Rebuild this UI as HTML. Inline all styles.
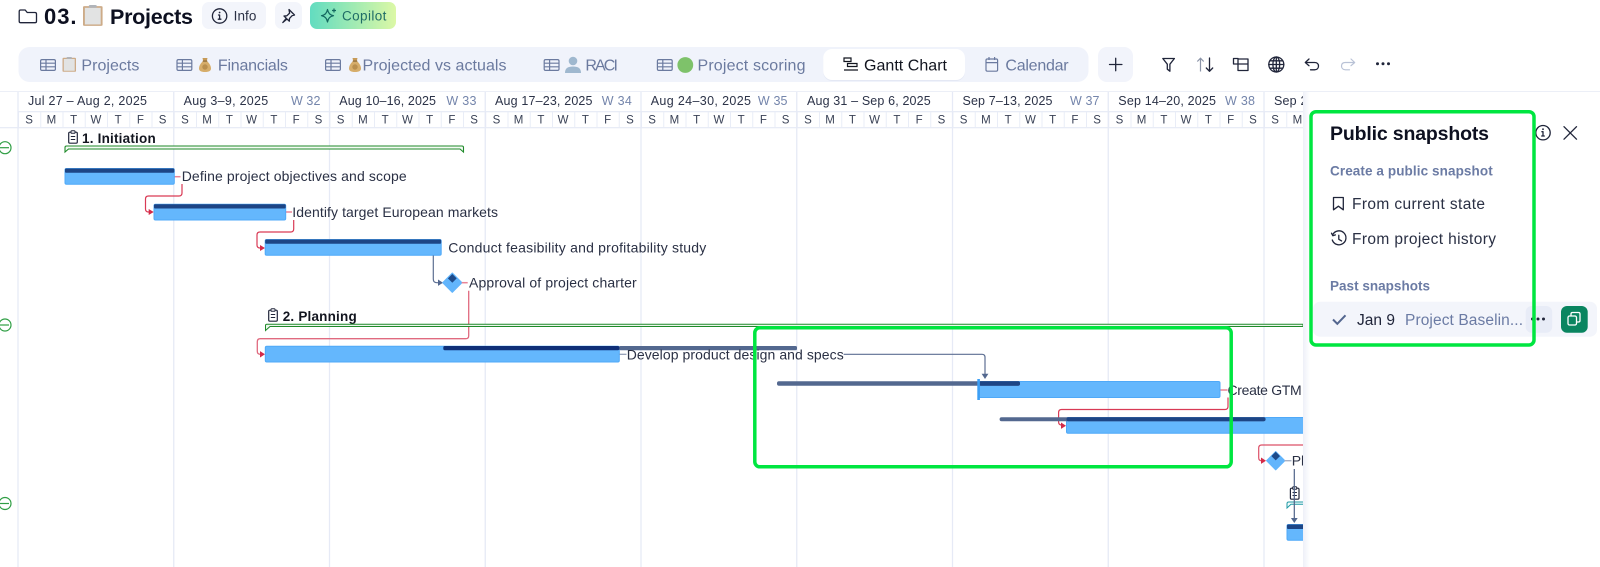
<!DOCTYPE html>
<html><head><meta charset="utf-8"><style>
html,body{margin:0;padding:0;background:#fff;width:1600px;height:567px;overflow:hidden}
svg{display:block}
text{font-family:"Liberation Sans",sans-serif}
.tab{font-size:16px;fill:#6b7a9f}
.date{font-size:12.5px;fill:#2c3348}
.wk{font-size:12.5px;fill:#7485ab}
.day{font-size:11.5px;fill:#3a4256;text-anchor:middle}
.lbl{font-size:14px;fill:#2a3044}
.grp{font-size:13.5px;font-weight:bold;fill:#12151f}
.ti{fill:none;stroke:#6b7a9f;stroke-width:1.2}
.ic{fill:none;stroke:#20253a;stroke-width:1.3;stroke-linecap:round;stroke-linejoin:round}
.red{fill:none;stroke:#d93a55;stroke-width:1.2}
.redl{fill:none;stroke:#ea8496;stroke-width:1.5}
.gry{fill:none;stroke:#5d6f92;stroke-width:1.2}
.bar{fill:#64b7fd;stroke:#4fa9f8;stroke-width:1}
.dk{fill:#1d4585}
.bl{fill:#53688f}
</style></head><body>
<svg width="1600" height="567" viewBox="0 0 1600 567" xmlns="http://www.w3.org/2000/svg">
<defs>
<pattern id="dp" x="18" y="112" width="22.25" height="15" patternUnits="userSpaceOnUse"><rect x="0" y="0" width="1" height="15" fill="#e9edf7"/></pattern>
<linearGradient id="cop" x1="0" x2="1" y1="0" y2="0"><stop offset="0" stop-color="#62dcc0"/><stop offset="1" stop-color="#dcf8a6"/></linearGradient>
<linearGradient id="sh" x1="0" x2="1" y1="0" y2="0"><stop offset="0" stop-color="#eef0f8"/><stop offset="1" stop-color="#fff"/></linearGradient>
<g id="tbl"><rect x=".6" y=".6" width="14.8" height="10.8" rx="1.4" class="ti"/><path d="M.6 4.2H15.4M.6 7.8H15.4M6 .6V11.4" class="ti"/></g>
<g id="clip"><rect x="0" y="1" width="13.5" height="17.5" rx="1" fill="#cdab88"/><rect x="1.3" y="2.5" width="10.9" height="14.7" fill="#e2e3e3"/><rect x="4" y="0" width="5.5" height="2.4" rx="1" fill="#b0b4ba"/></g>
<g id="bag"><path d="M4 3.5C1 6.5 0 9 0 11c0 2.4 2 3.5 6 3.5s6-1.1 6-3.5c0-2-1-4.5-4-7.500z" fill="#d6ad6a"/><path d="M3.5 .5L8.5 .5 7.8 3.5H4.2z" fill="#c69a58"/><rect x="3.8" y="3" width="4.4" height="1.2" fill="#8a6a3a"/><circle cx="6" cy="9.5" r="2.7" fill="#b98f4e"/></g>
<g id="cb"><rect x=".7" y="2.2" width="8.6" height="11" rx="1.2" fill="none" stroke="#20253a" stroke-width="1.2"/><rect x="3" y=".7" width="4" height="2.6" rx=".8" fill="#fff" stroke="#20253a" stroke-width="1"/><path d="M2.8 6.5H7.2M2.8 9.500H7.2" stroke="#20253a" stroke-width="1.1"/></g>
</defs>

<!-- Header -->
<path d="M19.2 11.5c0-.9.6-1.500 1.400-1.500h4.600l2 2.500h7.800c.9 0 1.500.7 1.500 1.500v7.200c0 .9-.7 1.500-1.500 1.500H20.700c-.9 0-1.500-.7-1.500-1.500z" class="ic"/>
<text x="44" y="24" font-size="22" font-weight="bold" fill="#0d1020" textLength="32.5">03.</text>
<g transform="translate(83,5) scale(1.45,1.13)"><use href="#clip"/></g>
<text x="110" y="24" font-size="21.5" font-weight="bold" fill="#0d1020" textLength="83">Projects</text>
<rect x="202" y="2" width="64" height="27" rx="7" fill="#f3f5fb"/>
<circle cx="219.6" cy="16" r="7.2" class="ic"/><path d="M219.600 15v4.200M218.300 19.200h2.600M218.500 15h1.100" class="ic" stroke-width="1.1"/><circle cx="219.6" cy="12.5" r=".9" fill="#20253a"/>
<text x="233.6" y="20.500" font-size="13.5" fill="#2a3044" textLength="22.8">Info</text>
<rect x="275" y="2" width="27" height="27" rx="7" fill="#f3f5fb"/>
<path d="M289 9.500l5.500 5.500-2.300.6-2.700 2.800-.2 2.800-2.300-2.200-4.200 3.500 3.500-4.200-2.300-2.300 2.800-.2 2.800-2.700z" class="ic" stroke-width="1.15"/>
<rect x="310" y="2" width="86" height="27" rx="7" fill="url(#cop)"/>
<path d="M327.500 9.500c.8 3.700 2.300 5.300 6 6.200-3.700.9-5.200 2.500-6 6.300-.8-3.800-2.300-5.400-6-6.300 3.700-.9 5.200-2.500 6-6.200zM334 8.500v4M332 10.500h4" fill="none" stroke="#12675f" stroke-width="1.2" stroke-linejoin="round"/>
<text x="342" y="20.500" font-size="13.500" fill="#1f6c66" textLength="44.4">Copilot</text>

<!-- Tabs bar -->
<rect x="18.5" y="47" width="1070" height="35" rx="11" fill="#f0f3fb"/>
<use href="#tbl" x="40" y="59"/>
<g transform="translate(62.5,57) scale(1,.8)"><use href="#clip"/></g>
<text class="tab" x="81.4" y="70.500" textLength="58">Projects</text>
<use href="#tbl" x="176.4" y="59"/>
<use href="#bag" x="199" y="57.5"/>
<text class="tab" x="217.9" y="70.5" textLength="70">Financials</text>
<use href="#tbl" x="325" y="59"/>
<use href="#bag" x="349" y="57.5"/>
<text class="tab" x="362.5" y="70.5" textLength="144">Projected vs actuals</text>
<use href="#tbl" x="543.6" y="59"/>
<circle cx="573" cy="61" r="4.3" fill="#9fb8cf"/><path d="M565 73c0-5 3-6.500 8-6.500s8 1.500 8 6.500z" fill="#9fb8cf"/>
<text class="tab" x="585.4" y="70.5" textLength="32.5">RACI</text>
<use href="#tbl" x="656.8" y="59"/>
<circle cx="685.3" cy="65" r="7.9" fill="#7ec26a"/>
<text class="tab" x="697.5" y="70.5" textLength="108">Project scoring</text>
<rect x="823.2" y="49" width="141.8" height="31" rx="9" fill="#e4e8f4" transform="translate(0,1)"/>
<rect x="823.2" y="49" width="141.8" height="31" rx="9" fill="#fff"/>
<path d="M844 58h7v3.500h-7zM847.500 63.500h9.500v3h-9.500zM844 70h14" fill="none" stroke="#12151f" stroke-width="1.2"/>
<text x="864" y="70.5" font-size="16" fill="#12151f" textLength="83">Gantt Chart</text>
<rect x="986" y="59" width="11.6" height="12.2" rx="1.3" class="ti"/><path d="M986 62.600h11.600M989 57v3M994.600 57v3" class="ti"/>
<text class="tab" x="1005.4" y="70.5" textLength="63.2">Calendar</text>

<rect x="1098" y="47" width="35" height="35" rx="9" fill="#f2f4fb"/>
<path d="M1109.500 64.500h12.400M1115.700 58.300v12.400" class="ic" stroke-width="1.3"/>
<path d="M1162.800 58.500h11.600l-4.500 5.700v7l-2.600-2v-5z" class="ic" stroke-width="1.2"/>
<path d="M1200.500 71.500V58.300M1197.300 61.500l3.200-3.300 3.200 3.300" fill="none" stroke="#8b94a8" stroke-width="1.2"/><path d="M1209.500 58v13.300M1206.300 68l3.200 3.300 3.200-3.300" class="ic" stroke-width="1.2"/>
<path d="M1233.500 58.500h4.500M1233.500 58.500v5.500M1233.500 64h4.500M1238 59h10v5h-10zM1238 64h10v6.500h-10z" class="ic" stroke-width="1.2"/>
<circle cx="1276.3" cy="64.5" r="7.5" class="ic" stroke-width="1.25"/><ellipse cx="1276.3" cy="64.5" rx="3.4" ry="7.5" class="ic" stroke-width="1.1"/><path d="M1268.800 64.500h15M1270 60.800h12.600M1270 68.200h12.600M1276.300 57v15" class="ic" stroke-width="1"/>
<path d="M1309 59l-3.700 3.500 3.700 3.200M1305.500 62.500h9c2.700 0 4 1.500 4 3.500s-1.300 3.800-4 3.800h-4" class="ic" stroke-width="1.2"/>
<path d="M1351 59l3.700 3.500-3.700 3.200M1354.500 62.500h-9c-2.700 0-4 1.500-4 3.500s1.300 3.800 4 3.800h4" fill="none" stroke="#b9c2d6" stroke-width="1.2" stroke-linecap="round" stroke-linejoin="round"/>
<circle cx="1377.5" cy="63.8" r="1.5" fill="#20253a"/><circle cx="1383" cy="63.8" r="1.5" fill="#20253a"/><circle cx="1388.5" cy="63.8" r="1.5" fill="#20253a"/>

<!-- Timeline header -->
<rect x="0" y="91" width="1600" height="1" fill="#eceff7"/>
<rect x="18" y="111" width="1285" height="1.3" fill="#e8ecf6"/>
<rect x="0" y="127" width="1303" height="1.3" fill="#e8ecf6"/>
<rect x="18" y="112" width="1285" height="15" fill="url(#dp)"/>
<path d="M18 92V567M173.750 92V567M329.500 92V567M485.250 92V567M641 92V567M796.750 92V567M952.500 92V567M1108.250 92V567M1264 92V567" stroke="#e6eaf6" stroke-width="1.3" fill="none"/>

<text class="date" x="28" y="105" textLength="119">Jul 27 – Aug 2, 2025</text>
<text class="date" x="183.6" y="105" textLength="84.6">Aug 3–9, 2025</text>
<text class="wk" x="291" y="105" textLength="29.4">W 32</text>
<text class="date" x="339.3" y="105" textLength="96.7">Aug 10–16, 2025</text>
<text class="wk" x="446.4" y="105" textLength="30">W 33</text>
<text class="date" x="495" y="105" textLength="97.5">Aug 17–23, 2025</text>
<text class="wk" x="601.8" y="105" textLength="30">W 34</text>
<text class="date" x="650.7" y="105" textLength="100.3">Aug 24–30, 2025</text>
<text class="wk" x="757.9" y="105" textLength="29.6">W 35</text>
<text class="date" x="807" y="105" textLength="123.7">Aug 31 – Sep 6, 2025</text>
<text class="date" x="962.5" y="105" textLength="90">Sep 7–13, 2025</text>
<text class="wk" x="1070" y="105" textLength="29.5">W 37</text>
<text class="date" x="1118.3" y="105" textLength="97.7">Sep 14–20, 2025</text>
<text class="wk" x="1225" y="105" textLength="30">W 38</text>
<text class="date" x="1274" y="105" textLength="98">Sep 21–27, 2025</text>
<text class="day" y="123.500" x="29.1 51.4 73.6 95.9 118.1 140.4 162.6 184.9 207.1 229.4 251.6 273.9 296.1 318.4 340.6 362.9 385.1 407.4 429.6 451.9 474.1 496.4 518.6 540.9 563.1 585.4 607.6 629.9 652.1 674.4 696.6 718.9 741.1 763.4 785.6 807.9 830.1 852.4 874.6 896.9 919.1 941.4 963.6 985.9 1008.1 1030.4 1052.6 1074.9 1097.1 1119.4 1141.6 1163.9 1186.1 1208.4 1230.6 1252.9 1275.1 1297.4">SMTWTFSSMTWTFSSMTWTFSSMTWTFSSMTWTFSSMTWTFSSMTWTFSSMTWTFSSM</text>

<!-- Left markers -->
<g fill="none" stroke="#2f9e44" stroke-width="1.2"><circle cx="5" cy="147.7" r="6"/><path d="M0 147.700h9"/><circle cx="5" cy="325" r="6"/><path d="M0 325h9"/><circle cx="5" cy="503.5" r="6"/><path d="M0 503.500h9"/></g>

<!-- Group 1 -->
<g transform="translate(68,130)"><use href="#cb"/></g>
<text class="grp" x="82" y="143" textLength="73.7">1. Initiation</text>
<path d="M65 152v-4.500q0-1.500 1.500-1.500H462q1.500 0 1.500 1.500V152l-3.500-3H68.500z" fill="#f4fbf4" stroke="#1f8a2a" stroke-width="1.1"/>

<!-- Task 1 -->
<path d="M174.500 176.700h6" class="redl"/>
<path d="M182 184v9q0 3-3 3H148.500q-3 0-3 3v10q0 3 3 3h3" class="red"/><path d="M153.700 212l-5-3v6z" fill="#d42a48"/>
<rect x="65" y="168.5" width="109.3" height="15.8" rx="1.5" class="bar"/><rect x="65" y="168.5" width="109.3" height="4.3" rx="1" class="dk"/>
<text class="lbl" x="181.7" y="181" textLength="225">Define project objectives and scope</text>

<!-- Task 2 -->
<path d="M286 212h6" class="redl"/>
<path d="M293.700 220v9q0 3-3 3H260q-3 0-3 3v10q0 3 3 3h3" class="red"/><path d="M265 248l-5-3v6z" fill="#d42a48"/>
<rect x="154" y="204.2" width="131.7" height="15.8" rx="1.5" class="bar"/><rect x="154" y="204.2" width="131.7" height="4.3" rx="1" class="dk"/>
<text class="lbl" x="292.3" y="217" textLength="205.7">Identify target European markets</text>

<!-- Task 3 -->
<rect x="265.2" y="239.5" width="176" height="15.8" rx="1.5" class="bar"/><rect x="265.2" y="239.5" width="176" height="4.3" rx="1" class="dk"/>
<text class="lbl" x="448.3" y="252.3" textLength="258">Conduct feasibility and profitability study</text>
<path d="M433.300 255.500V279q0 3.700 3.500 3.700h3" class="gry"/><path d="M443 282.700l-5-3.200v6.400z" fill="#53688f"/>

<!-- Milestone 1 -->
<path d="M452.300 273l9.700 9.700-9.700 9.700-9.700-9.700z" fill="#62b5fc" stroke="#62b5fc" stroke-linejoin="round"/>
<path d="M452.300 274l4.400 4.400-4.400 4.400-4.400-4.400z" fill="#1d4a8a"/>
<path d="M461.700 282.700h6" class="redl"/>
<text class="lbl" x="469" y="287.700" textLength="167.700">Approval of project charter</text>
<path d="M468.700 290.700V335.700q0 3-3 3H260.300q-3 0-3 3v9.600q0 3 3 3h2" class="red" style="stroke:#e06a7f;stroke-width:1.3"/><path d="M265 354.300l-5-3.200v6.400z" fill="#d42a48"/>

<!-- Group 2 -->
<g transform="translate(268,308)"><use href="#cb"/></g>
<text class="grp" x="282.7" y="321" textLength="74">2. Planning</text>
<path d="M265.500 330.500v-5q0-1.300 1.300-1.300H1303v2.300H270l-4.500 4z" fill="#eef7ee" stroke="#1f8a2a" stroke-width="1"/>

<!-- Task 4 -->
<rect x="265.3" y="346.2" width="354" height="15.8" rx="1.5" class="bar"/>
<rect x="619" y="346" width="178" height="4.2" rx="1.5" class="bl"/>
<rect x="443.3" y="346" width="176" height="4.2" rx="1.5" fill="#0f2f78"/>
<path d="M619.500 354.300h7" stroke="#8d99b3" stroke-width="1.2"/>
<text class="lbl" x="626.7" y="359.3" textLength="217">Develop product design and specs</text>
<path d="M843.600 354.300H982q3 0 3 3V375" class="gry"/><path d="M985 379l-3.400-5.200h6.800z" fill="#53688f"/>

<!-- Task 5 -->
<rect x="978.5" y="381.5" width="241.5" height="16" rx="1.5" class="bar"/>
<rect x="777" y="381.3" width="243" height="4.4" rx="2" class="bl"/>
<rect x="979" y="381.3" width="41" height="4.4" rx="2" class="dk"/>
<rect x="977.3" y="379" width="2.6" height="21" fill="#3c9ff5"/>
<path d="M1220.500 390h7" class="redl"/>
<text class="lbl" x="1227.5" y="395" textLength="125">Create GTM strategy</text>
<path d="M1228 397.500v9q0 3-3 3H1061.600q-3 0-3 3v9.500q0 3 3 3h1" class="red"/><path d="M1066 425.700l-5-3.200v6.400z" fill="#d42a48"/>

<!-- Task 6 -->
<rect x="1066.5" y="417.5" width="240" height="15.8" rx="1.5" class="bar"/>
<rect x="999.6" y="417.3" width="266" height="4" rx="2" class="bl"/>
<rect x="1066.5" y="417.3" width="199" height="4" rx="2" class="dk"/>

<!-- Milestone 2 -->
<path d="M1303 445H1261.700q-3 0-3 3v9.700q0 3 3 3h1" class="red" style="stroke:#dc5068"/><path d="M1266 460.700l-5-3.200v6.400z" fill="#d42a48"/>
<path d="M1275.700 451.500l9.200 9.200-9.200 9.200-9.200-9.200z" fill="#62b5fc" stroke="#62b5fc" stroke-linejoin="round"/>
<path d="M1275.700 451.800l4.300 4.300-4.300 4.300-4.300-4.300z" fill="#1d4a8a"/>
<path d="M1284.500 460.700h7" stroke="#a9b1c4" stroke-width="1.4"/>
<text class="lbl" x="1291.7" y="465.700">Plan launch</text>

<g transform="translate(1289.7,486)"><use href="#cb"/></g>
<path d="M1287 508v-4.300q0-1.700 1.700-1.700H1310v2.200h-19l-4 3.800z" fill="#f2fbfb" stroke="#1f9aa5" stroke-width="1"/>
<path d="M1294.300 469V519" stroke="#4f6388" stroke-width="1.2"/><path d="M1294.300 523l-3.400-5h6.800z" fill="#53688f"/>
<rect x="1287" y="524.5" width="30" height="15.8" rx="1.5" class="bar"/><rect x="1287" y="524.5" width="30" height="4.5" rx="1" class="dk"/>

<!-- Side panel -->
<rect x="1303" y="92" width="297" height="475" fill="#fff"/>
<rect x="1303" y="92" width="7" height="475" fill="url(#sh)"/>
<text x="1330" y="140" font-size="19.5" font-weight="bold" fill="#0d1020" textLength="159">Public snapshots</text>
<text x="1330" y="175.5" font-size="13.5" font-weight="bold" fill="#6b7ba4" textLength="162.7">Create a public snapshot</text>
<circle cx="1543" cy="132.7" r="7.2" class="ic"/><path d="M1543 131.700v4.300M1541.700 136h2.600M1541.900 131.700h1.100" class="ic" stroke-width="1.1"/><circle cx="1543" cy="129.2" r=".9" fill="#20253a"/>
<path d="M1564 126.700l12.500 12.500M1576.500 126.700l-12.500 12.500" class="ic" stroke-width="1.3"/>
<path d="M1333.500 197.500h9.800v12.300l-4.900-3.600-4.900 3.600z" class="ic" stroke-width="1.3"/>
<text x="1352" y="209.2" font-size="15.5" fill="#2a3044" textLength="133">From current state</text>
<path d="M1332.800 234.500a7 7 0 1 1-.5 5.500M1331.500 233.200l1.300 2.500 2.600-.8M1338.800 235.300v4l2.800 1.600" class="ic" stroke-width="1.25"/>
<text x="1352" y="244.2" font-size="15.5" fill="#2a3044" textLength="144">From project history</text>
<text x="1330" y="290.5" font-size="13.5" font-weight="bold" fill="#6b7ba4" textLength="100">Past snapshots</text>
<rect x="1313" y="301.7" width="284" height="35" rx="7" fill="#f3f5fb"/>
<path d="M1333 319.500l4.300 4.300 8.200-8.500" fill="none" stroke="#53668f" stroke-width="2"/>
<text x="1357" y="325" font-size="15.5" fill="#20253a" textLength="38">Jan 9</text>
<text x="1405" y="325" font-size="15.5" fill="#6b7ba4" textLength="118">Project Baselin...</text>
<rect x="1525.7" y="306" width="26.5" height="26.7" rx="6" fill="#e8ecf7"/>
<circle cx="1532.5" cy="319" r="1.5" fill="#20253a"/><circle cx="1538" cy="319" r="1.5" fill="#20253a"/><circle cx="1543.5" cy="319" r="1.5" fill="#20253a"/>
<rect x="1561" y="306" width="26.7" height="26.7" rx="6" fill="#0a8560"/>
<rect x="1568" y="316" width="8.5" height="9" rx="1.5" fill="none" stroke="#fff" stroke-width="1.3"/><path d="M1571 315.500v-1.500q0-1.500 1.500-1.500h6q1.500 0 1.500 1.500v6.500q0 1.500-1.500 1.500h-2" fill="none" stroke="#fff" stroke-width="1.3"/>

<!-- Highlight boxes -->
<rect x="1311" y="111.7" width="223" height="233.3" rx="5" fill="none" stroke="#00e640" stroke-width="3.5"/>
<rect x="754.8" y="327.8" width="476.4" height="139" rx="5" fill="none" stroke="#00e640" stroke-width="3.5"/>
</svg>
</body></html>
